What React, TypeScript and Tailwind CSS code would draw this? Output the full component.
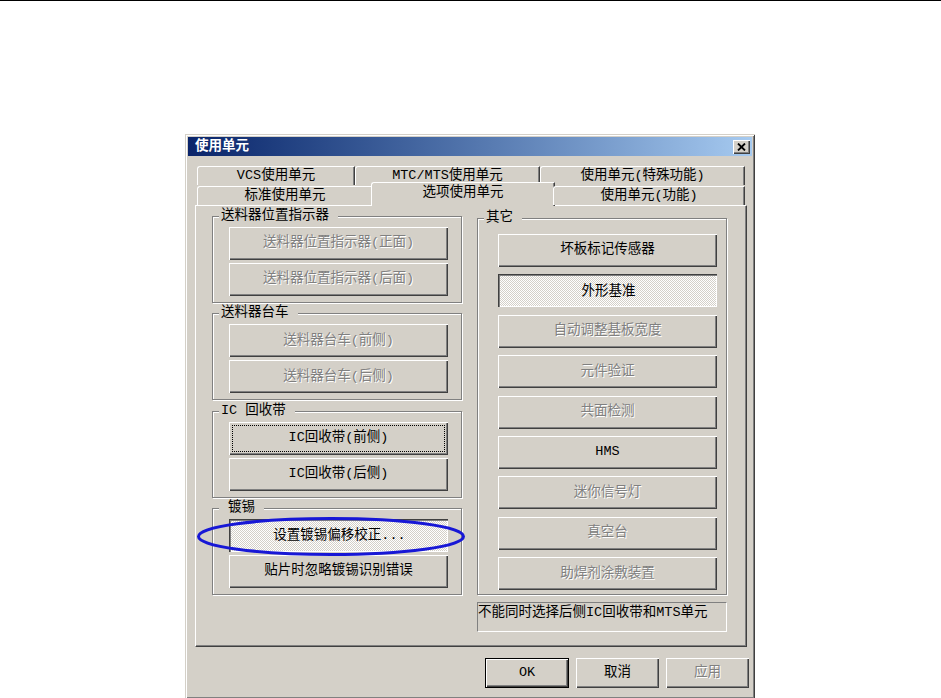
import type { ReactNode } from "react";

type BtnState = "normal" | "disabled" | "pressed" | "focused";

const FONT = "font-['Liberation_Mono','Noto_Sans_CJK_SC',monospace]";
const RAISED = "bg-[#d4d0c8] shadow-[inset_1px_1px_#fff,inset_-1px_-1px_#404040,inset_-2px_-2px_#808080]";
const SUNKEN =
  "bg-[repeating-conic-gradient(#fff_0_25%,#d4d0c8_0_50%)] bg-[length:2px_2px] shadow-[inset_1px_1px_#404040,inset_2px_2px_#808080,inset_-1px_-1px_#fff]";

function Btn({ label, state = "normal", className = "" }: { label: string; state?: BtnState; className?: string }) {
  const look =
    state === "pressed"
      ? `${SUNKEN} text-black pt-[2px] pl-[2px]`
      : state === "disabled"
        ? `${RAISED} text-[#808080] [text-shadow:1px_1px_#fff]`
        : `${RAISED} text-black`;
  return (
    <div className={`relative flex w-[219px] shrink-0 items-center justify-center text-[13.5px] ${look} ${className}`}>
      {state === "focused" && <span className="absolute inset-[3px] border border-dotted border-black" />}
      {label}
    </div>
  );
}

function Group({ label, labelPad = "pl-[2px]", className = "", children }: { label: string; labelPad?: string; className?: string; children: ReactNode }) {
  return (
    <div className={`relative border border-[#808080] shadow-[inset_1px_1px_#fff,1px_1px_#fff] ${className}`}>
      <span className={`absolute -top-[9px] left-[6px] bg-[#d4d0c8] pr-[9px] text-[13.5px] leading-[16px] text-black ${labelPad}`}>{label}</span>
      {children}
    </div>
  );
}

const TAB = "flex items-center justify-center rounded-tl-[3px] border-l border-t border-white border-r border-r-[#404040] bg-[#d4d0c8] shadow-[inset_-1px_0_#808080] text-[13.5px] text-black";

export default function App() {
  const leftGroups: { label: string; pad?: string; buttons: { label: string; state?: BtnState }[] }[] = [
    { label: "送料器位置指示器", buttons: [{ label: "送料器位置指示器(正面)", state: "disabled" }, { label: "送料器位置指示器(后面)", state: "disabled" }] },
    { label: "送料器台车", buttons: [{ label: "送料器台车(前侧)", state: "disabled" }, { label: "送料器台车(后侧)", state: "disabled" }] },
    { label: "IC 回收带", buttons: [{ label: "IC回收带(前侧)", state: "focused" }, { label: "IC回收带(后侧)" }] },
    { label: "镀锡", pad: "pl-[9px]", buttons: [{ label: "设置镀锡偏移校正...", state: "pressed" }, { label: "贴片时忽略镀锡识别错误" }] },
  ];

  const others: { label: string; state?: BtnState }[] = [
    { label: "坏板标记传感器" },
    { label: "外形基准", state: "pressed" },
    { label: "自动调整基板宽度", state: "disabled" },
    { label: "元件验证", state: "disabled" },
    { label: "共面检测", state: "disabled" },
    { label: "HMS" },
    { label: "迷你信号灯", state: "disabled" },
    { label: "真空台", state: "disabled" },
    { label: "助焊剂涂敷装置", state: "disabled" },
  ];

  return (
    <div className={`relative h-[698px] w-full overflow-hidden border-t border-black bg-white ${FONT}`}>
      <div className="pl-[185px] pt-[133px]">
        {/* dialog window */}
        <div className="flex h-[565px] w-[570px] flex-col bg-[#d4d0c8] p-[3px] shadow-[inset_1px_1px_#d4d0c8,inset_-1px_-1px_#404040,inset_2px_2px_#fff,inset_-2px_-2px_#808080]">
          <div className="flex h-[19px] shrink-0 items-center justify-between bg-gradient-to-r from-[#0a246a] to-[#a6caf0] pl-[7px] pr-[2px]">
            <span className="text-[13.5px] font-bold leading-none text-white">使用单元</span>
            <div className={`flex h-[14px] w-[17px] items-center justify-center ${RAISED}`}>
              <svg width="9" height="8" viewBox="0 0 9 8">
                <path d="M1 0.5 L8 7.5 M8 0.5 L1 7.5" stroke="#000" strokeWidth="1.8" />
              </svg>
            </div>
          </div>

          <div className="flex flex-col pl-[7px] pr-[5px] pt-[10px]">
            {/* tabs */}
            <div className="ml-[2px] flex h-[19px] w-[548px]">
              <div className={`${TAB} w-[158px]`}>VCS使用单元</div>
              <div className={`${TAB} w-[185px]`}>MTC/MTS使用单元</div>
              <div className={`${TAB} w-[205px]`}>使用单元(特殊功能)</div>
            </div>
            <div className="relative z-10 ml-[2px] flex h-[20px] w-[548px] items-end">
              <div className={`${TAB} h-[19px] w-[176px]`}>标准使用单元</div>
              <div className={`${TAB} -mx-[2px] -mb-[1px] h-[24px] w-[184px] border-r-[#404040] pb-[2px]`}>选项使用单元</div>
              <div className={`${TAB} h-[19px] w-[192px]`}>使用单元(功能)</div>
            </div>

            {/* panel */}
            <div className="flex h-[442px] w-[552px] gap-[15px] border-l border-t border-white border-r border-b border-r-[#404040] border-b-[#404040] pl-[16px] pt-[10px] shadow-[inset_-1px_-1px_#808080]">
              <div className="flex w-[250px] flex-col gap-[10.3px]">
                {leftGroups.map((g) => (
                  <Group key={g.label} label={g.label} labelPad={g.pad} className="h-[87px] shrink-0">
                    <div className="flex flex-col gap-[3px] pl-[16px] pt-[10px]">
                      {g.buttons.map((b) => (
                        <Btn key={b.label} label={b.label} state={b.state} className="h-[33px]" />
                      ))}
                    </div>
                  </Group>
                ))}
              </div>

              <div className="flex w-[250px] flex-col pt-[2px]">
                <Group label="其它" className="h-[377px] shrink-0">
                  <div className="flex flex-col gap-[7.4px] pl-[20px] pt-[15px]">
                    {others.map((b) => (
                      <Btn key={b.label} label={b.label} state={b.state} className="h-[33px]" />
                    ))}
                  </div>
                </Group>
                <div className="mt-[7px] h-[30px] border-l border-t border-b border-r border-l-[#808080] border-t-[#808080] border-b-white border-r-white pt-[2px] text-[13.5px] leading-[16px] text-black">
                  不能同时选择后侧IC回收带和MTS单元
                </div>
              </div>
            </div>
          </div>

          {/* bottom buttons */}
          <div className="mt-[11px] flex justify-end gap-[7px] pr-[3px]">
            <div className="flex h-[30px] w-[84px] items-center justify-center border border-black bg-[#d4d0c8] text-[13.5px] text-black shadow-[inset_1px_1px_#fff,inset_-1px_-1px_#404040,inset_-2px_-2px_#808080]">
              OK
            </div>
            <div className={`flex h-[30px] w-[83px] items-center justify-center text-[13.5px] text-black ${RAISED}`}>取消</div>
            <div className={`flex h-[30px] w-[83px] items-center justify-center text-[13.5px] text-[#808080] [text-shadow:1px_1px_#fff] ${RAISED}`}>应用</div>
          </div>
        </div>
      </div>

      {/* hand-drawn annotation ellipse */}
      <svg className="absolute left-[196px] top-[515px]" width="270" height="41" viewBox="0 0 270 41">
        <ellipse cx="135" cy="20.5" rx="132.5" ry="18" fill="none" stroke="#1717d6" strokeWidth="3" />
      </svg>
    </div>
  );
}
